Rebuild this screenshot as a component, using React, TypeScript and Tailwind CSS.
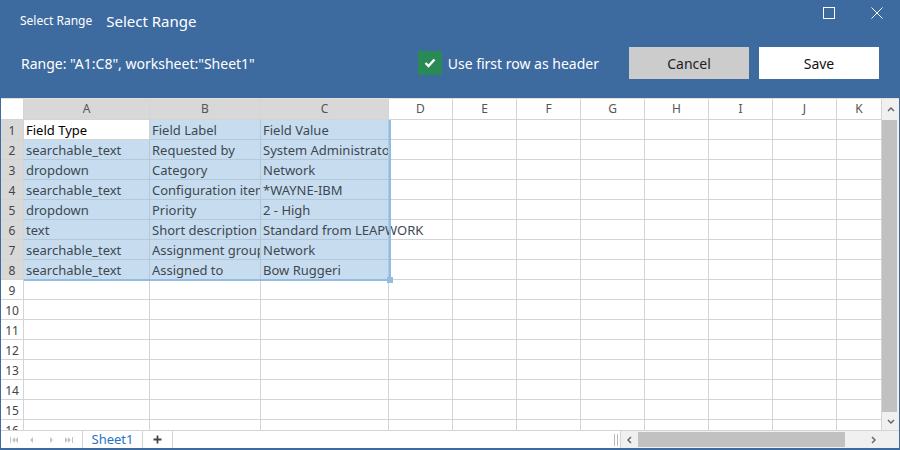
import React from 'react';

const FONT = { fontFamily: '"Noto Sans", "Open Sans", Arial, sans-serif' };

const DATA = [
  ['Field Type', 'Field Label', 'Field Value'],
  ['searchable_text', 'Requested by', 'System Administrator'],
  ['dropdown', 'Category', 'Network'],
  ['searchable_text', 'Configuration item', '*WAYNE-IBM'],
  ['dropdown', 'Priority', '2 - High'],
  ['text', 'Short description', 'Standard from LEAPWORK'],
  ['searchable_text', 'Assignment group', 'Network'],
  ['searchable_text', 'Assigned to', 'Bow Ruggeri'],
];

const COLS = [
  { key: 'A', w: 'w-[126px]' },
  { key: 'B', w: 'w-[111px]' },
  { key: 'C', w: 'w-[128px]' },
  { key: 'D', w: 'w-[64px]' },
  { key: 'E', w: 'w-[64px]' },
  { key: 'F', w: 'w-[64px]' },
  { key: 'G', w: 'w-[64px]' },
  { key: 'H', w: 'w-[64px]' },
  { key: 'I', w: 'w-[64px]' },
  { key: 'J', w: 'w-[64px]' },
  { key: 'K', w: 'flex-1' },
];

function Cell({ row, col }: { row: number; col: number }) {
  const selected = row <= 8 && col <= 2;
  const active = row === 1 && col === 0;
  const text = row <= 8 && col <= 2 ? DATA[row - 1][col] : '';
  const spill = row === 6 && col === 2;
  return (
    <div
      className={`${COLS[col].w} shrink-0 h-full border-r border-b pl-[2px] pt-[2px] flex items-center whitespace-nowrap text-[13px] ${
        spill ? 'overflow-visible' : 'overflow-hidden'
      } ${
        active
          ? 'bg-white text-black border-[#d4d4d4]'
          : selected
          ? 'bg-[#c7ddef] text-[#3e4852] border-[#b2c9dc]'
          : 'border-[#d4d4d4]'
      }`}
    >
      <span className={spill ? 'relative z-[1]' : ''}>{text}</span>
    </div>
  );
}

function Grid() {
  const rows = Array.from({ length: 16 }, (_, i) => i + 1);
  return (
    <div className="relative flex-1 min-w-0 overflow-hidden bg-white">
      <div className="flex h-[22px] border-t border-[#e0e0e0]">
        <div className="w-[23px] shrink-0 bg-white border-r border-b border-[#d4d4d4]" />
        {COLS.map((c, i) => (
          <div
            key={c.key}
            className={`${c.w} shrink-0 flex items-center justify-center text-[12px] text-[#555] border-r border-b border-[#d4d4d4] ${
              i <= 2 ? 'bg-[#d8d8d8]' : 'bg-white'
            }`}
          >
            {c.key}
          </div>
        ))}
      </div>
      {rows.map((r) => (
        <div key={r} className="flex h-[20px]">
          <div
            className={`w-[23px] shrink-0 flex items-center justify-center pt-[2px] text-[12px] text-[#444] border-r border-b border-[#d4d4d4] ${
              r <= 8 ? 'bg-[#d8d8d8]' : 'bg-white'
            }`}
          >
            {r}
          </div>
          {COLS.map((c, i) => (
            <Cell key={c.key} row={r} col={i} />
          ))}
        </div>
      ))}
      {/* selection frame */}
      <div className="absolute left-[23px] top-[22px] w-[367px] h-[161px] border-r-2 border-b-2 border-[#8fbde3] z-10 pointer-events-none" />
      <div className="absolute left-[386px] top-[179px] w-[6px] h-[6px] bg-[#8fbde3] z-10" />
    </div>
  );
}

function Chevron({ dir }: { dir: 'up' | 'down' | 'left' | 'right' }) {
  const d = {
    up: 'M2 6 L5 3 L8 6',
    down: 'M2 4 L5 7 L8 4',
    left: 'M6 2 L3 5 L6 8',
    right: 'M4 2 L7 5 L4 8',
  }[dir];
  return (
    <svg width="10" height="10" viewBox="0 0 10 10">
      <path d={d} fill="none" stroke="#606060" strokeWidth="1.4" />
    </svg>
  );
}

function NavIcon({ kind }: { kind: 'first' | 'prev' | 'next' | 'last' }) {
  return (
    <svg width="10" height="8" viewBox="0 0 10 8" fill="#c4c4c4">
      {kind === 'first' && (
        <>
          <rect x="1" y="1" width="1" height="6" />
          <path d="M6 1 L3 4 L6 7Z M9 1 L6 4 L9 7Z" />
        </>
      )}
      {kind === 'prev' && <path d="M6 1 L3 4 L6 7Z" />}
      {kind === 'next' && <path d="M4 1 L7 4 L4 7Z" />}
      {kind === 'last' && (
        <>
          <rect x="8" y="1" width="1" height="6" />
          <path d="M1 1 L4 4 L1 7Z M4 1 L7 4 L4 7Z" />
        </>
      )}
    </svg>
  );
}

export default function App() {
  return (
    <div className="w-[900px] h-[450px] bg-[#3e6b9f] flex flex-col text-white overflow-hidden" style={FONT}>
      {/* header */}
      <div className="h-[98px] shrink-0 flex flex-col">
        <div className="flex h-[42px]">
          <div className="flex items-center pl-[20px] gap-[14px]">
            <span className="text-[12px]">Select Range</span>
            <span className="text-[15px]">Select Range</span>
          </div>
          <div className="ml-auto flex items-start pt-[7px] pr-[17px] gap-[36px]">
            <svg width="12" height="12" viewBox="0 0 12 12">
              <rect x="0.5" y="0.5" width="11" height="11" fill="none" stroke="white" strokeWidth="1" />
            </svg>
            <svg width="12" height="12" viewBox="0 0 12 12">
              <path d="M0.5 0.5 L11.5 11.5 M11.5 0.5 L0.5 11.5" stroke="white" strokeWidth="1" />
            </svg>
          </div>
        </div>
        <div className="flex items-center h-[32px] mt-[5px] pl-[21px] pr-[21px]">
          <span className="text-[14px]">Range: "A1:C8", worksheet:"Sheet1"</span>
          <div className="ml-auto flex items-center gap-[6px]">
            <div className="w-[24px] h-[24px] bg-[#2a8a56] flex items-center justify-center">
              <svg width="12" height="10" viewBox="0 0 12 10">
                <path d="M1.5 5 L4.5 8 L10.5 1.5" fill="none" stroke="white" strokeWidth="2.4" />
              </svg>
            </div>
            <span className="text-[14px]">Use first row as header</span>
          </div>
          <button className="ml-[30px] w-[120px] h-[32px] bg-[#cccccc] text-[#222] text-[14px]">Cancel</button>
          <button className="ml-[10px] w-[120px] h-[32px] bg-white text-[#111] text-[14px]">Save</button>
        </div>
      </div>

      {/* spreadsheet */}
      <div className="flex-1 min-h-0 flex flex-col mx-[1px] mb-[2px] bg-white text-black">
        <div className="flex-1 min-h-0 flex overflow-hidden">
          <Grid />
          <div className="w-[17px] shrink-0 bg-[#f0f0f0] flex flex-col border-t border-[#e0e0e0]">
            <div className="h-[21px] flex items-center justify-center">
              <Chevron dir="up" />
            </div>
            <div className="flex-1 w-[15px] bg-[#c1c1c1]" />
            <div className="h-[18px] flex items-center justify-center">
              <Chevron dir="down" />
            </div>
          </div>
        </div>
        <div className="h-[18px] shrink-0 flex border-t border-[#d4d4d4] bg-white">
          <div className="w-[82px] flex items-center justify-around px-[4px] border-r border-[#d4d4d4]">
            <NavIcon kind="first" />
            <NavIcon kind="prev" />
            <NavIcon kind="next" />
            <NavIcon kind="last" />
          </div>
          <div className="w-[60px] flex items-center justify-center text-[13px] text-[#1f72c6] border-r border-[#d4d4d4]">
            Sheet1
          </div>
          <div className="w-[30px] flex items-center justify-center border-r border-[#d4d4d4]">
            <svg width="9" height="9" viewBox="0 0 9 9">
              <path d="M4.5 0.5 V8.5 M0.5 4.5 H8.5" stroke="#444" strokeWidth="1.8" />
            </svg>
          </div>
          <div className="flex-1" />
          <div className="w-[8px] flex items-center justify-center gap-[2px]">
            <div className="w-[1px] h-[12px] bg-[#b8b8b8]" />
            <div className="w-[1px] h-[12px] bg-[#b8b8b8]" />
          </div>
          <div className="w-[262px] flex items-center bg-[#f0f0f0] border-l border-[#d4d4d4]">
            <div className="w-[17px] flex items-center justify-center">
              <Chevron dir="left" />
            </div>
            <div className="w-[207px] h-[15px] bg-[#c1c1c1]" />
            <div className="flex-1 flex items-center justify-end pr-[4px]">
              <Chevron dir="right" />
            </div>
          </div>
          <div className="w-[17px] bg-[#f0f0f0]" />
        </div>
      </div>
    </div>
  );
}
